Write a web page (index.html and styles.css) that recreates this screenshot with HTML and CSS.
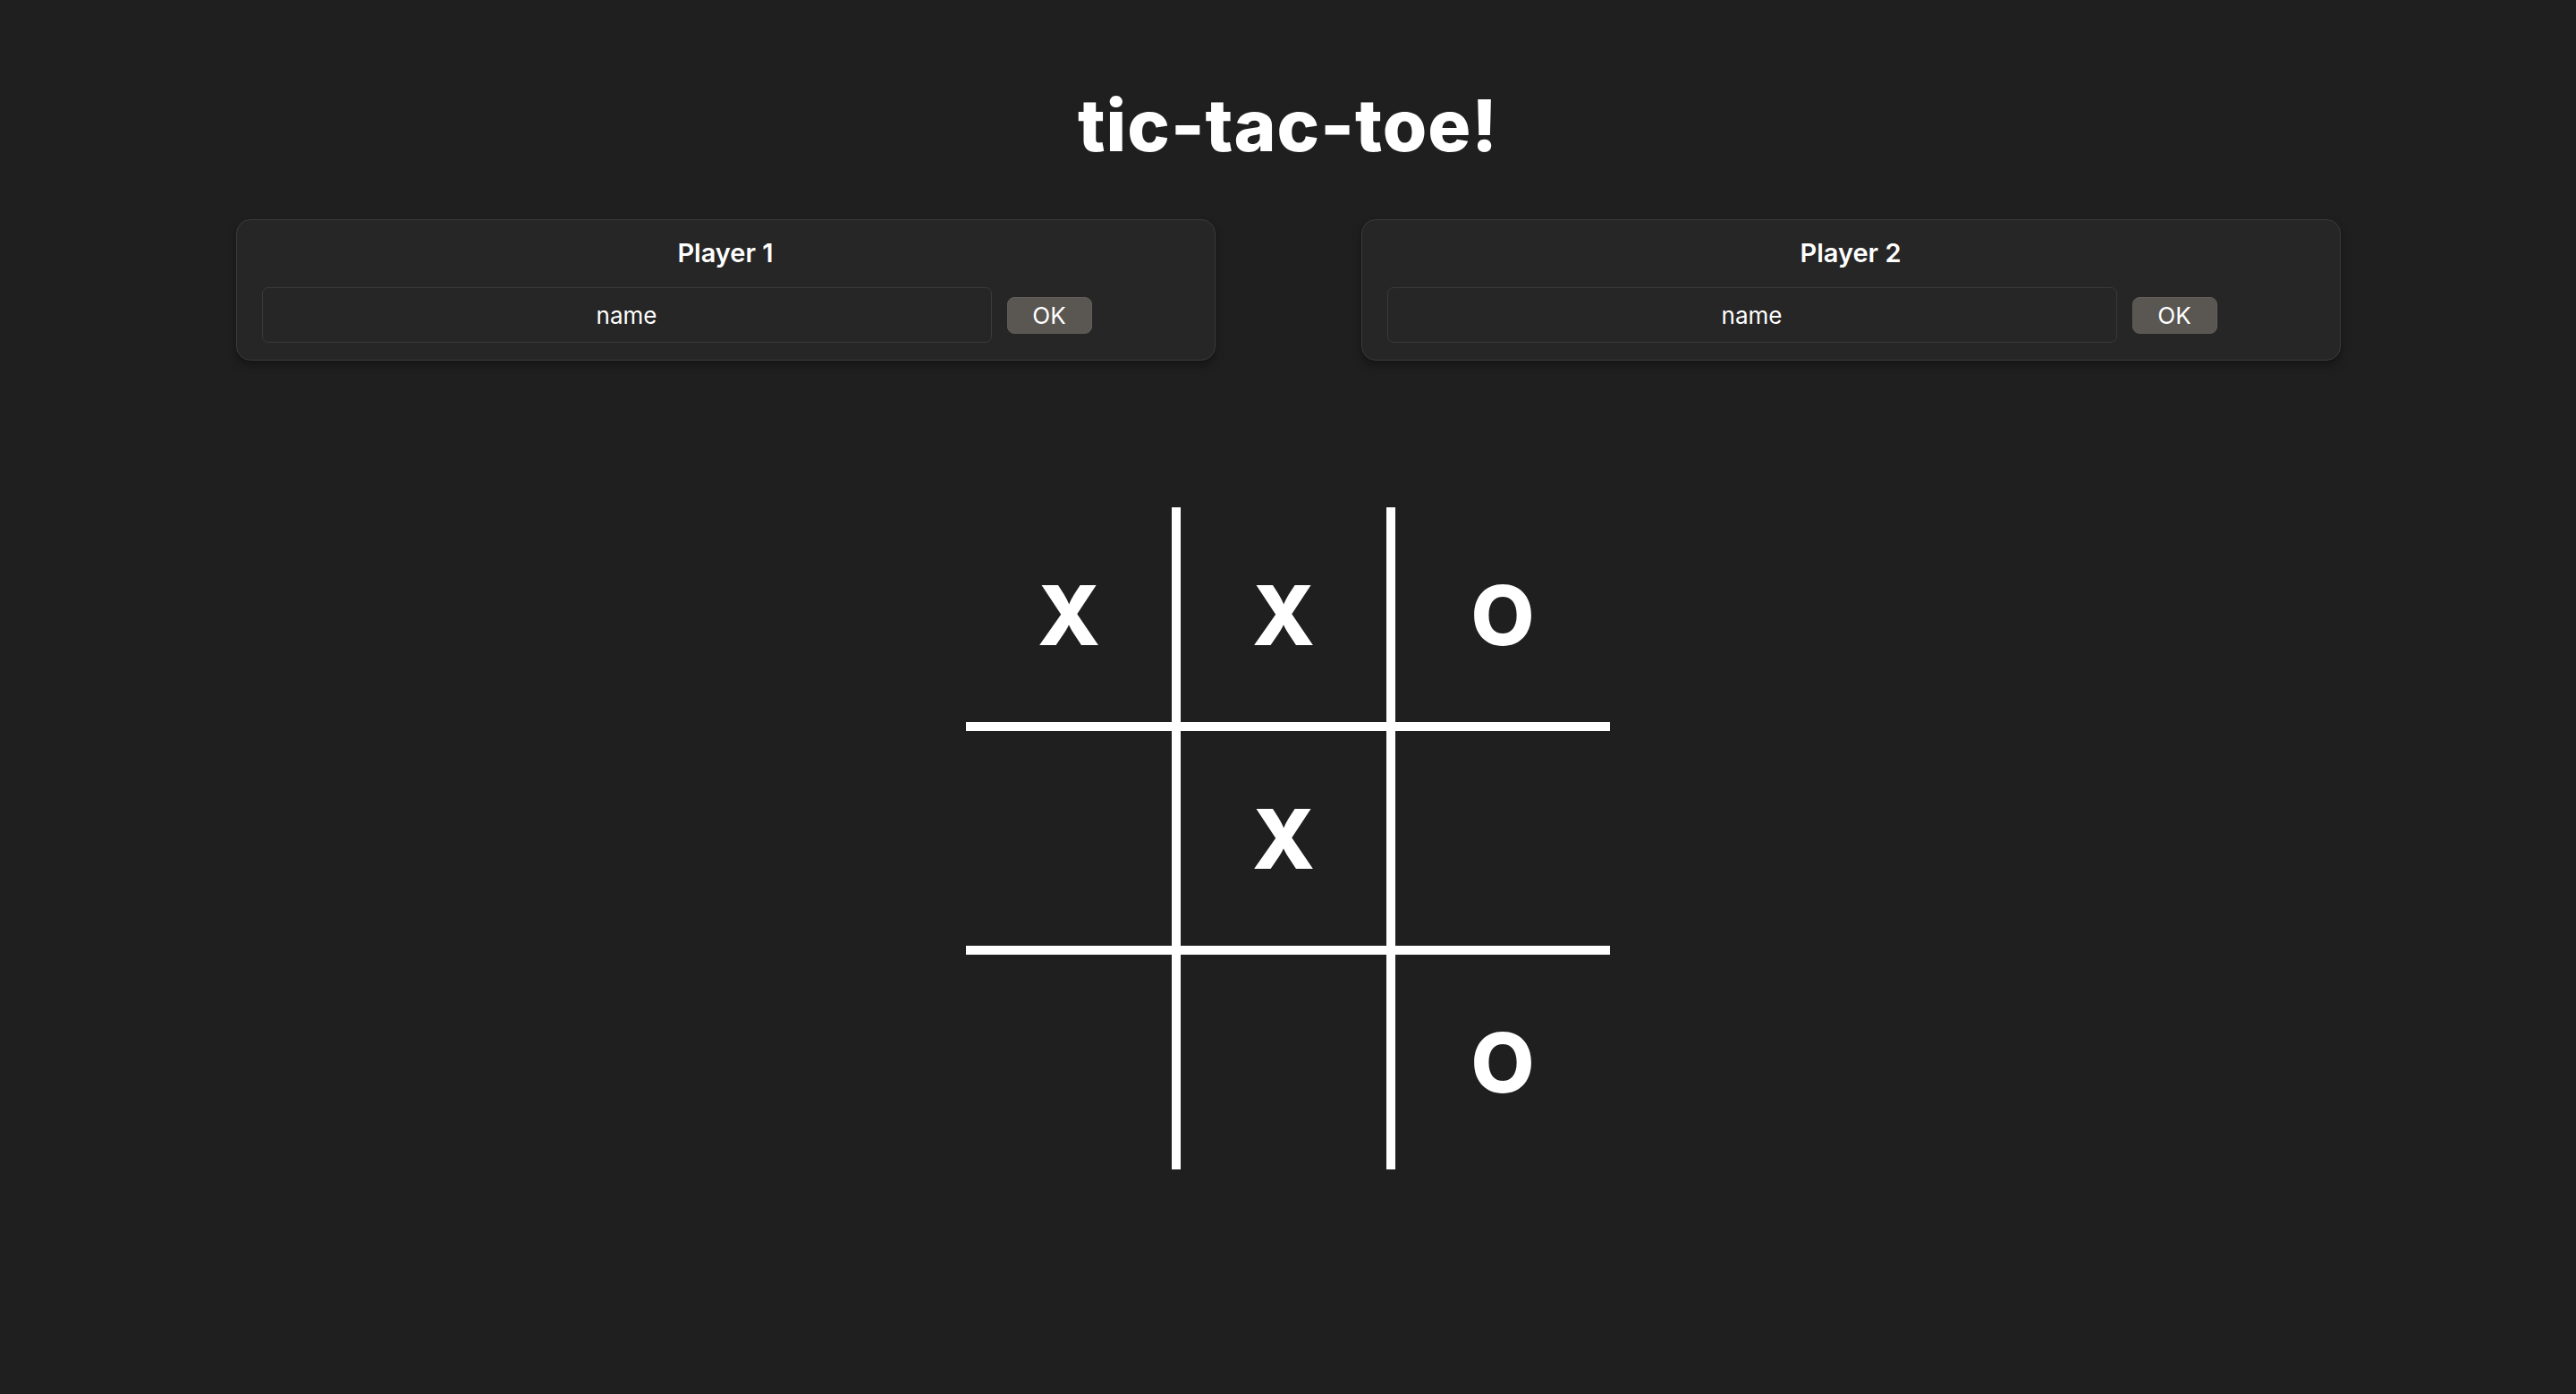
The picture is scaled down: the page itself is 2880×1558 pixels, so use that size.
FILE: index.html
```html
<!doctype html>
<html lang="en">
  <head>
    <meta charset="UTF-8" />
    <meta name="viewport" content="width=device-width, initial-scale=1.0" />
    <title>tic-tac-toe!</title>
    <link rel="stylesheet" href="styles.css">
  </head>
  <body>
    <h1 class="title">tic-tac-toe!</h1>

    <div class="players">
      <form class="player">
        <label class="player-label" for="p1">Player 1</label>
        <div class="player-row">
          <input type="text" id="p1" class="player-input" placeholder="name" />
          <button type="submit" class="player-ok">OK</button>
        </div>
      </form>
      <form class="player">
        <label class="player-label" for="p2">Player 2</label>
        <div class="player-row">
          <input type="text" id="p2" class="player-input" placeholder="name" />
          <button type="submit" class="player-ok">OK</button>
        </div>
      </form>
    </div>

    <div class="board">
      <div class="cell col-a row-a">X</div>
      <div class="cell col-b row-a">X</div>
      <div class="cell row-a">O</div>
      <div class="cell col-a row-b"></div>
      <div class="cell col-b row-b">X</div>
      <div class="cell row-b"></div>
      <div class="cell col-a"></div>
      <div class="cell col-b"></div>
      <div class="cell">O</div>
    </div>
  </body>
</html>
```

FILE: styles.css
```css
body {
  margin: 0;
  background-color: #1f1f1f;
  color: #ffffff;
  font-family: Inter, "Noto Sans", sans-serif;
}
.title {
  margin: 0;
  padding-top: 100px;
  font-size: 80px;
  font-weight: 800;
  line-height: 1;
  text-align: center;
  letter-spacing: 1px;
}
.players {
  display: grid;
  grid-template-columns: 1095px 1095px;
  column-gap: 163px;
  justify-content: center;
  margin-top: 65px;
}
.player {
  display: flex;
  flex-direction: column;
  padding: 20px 28px 19px;
  background-color: #262626;
  border: 1px solid #3b3b3b;
  border-radius: 16px;
  box-shadow: 0 5px 10px rgba(0, 0, 0, 0.35);
}
.player-label {
  font-size: 29px;
  font-weight: 600;
  text-align: center;
  line-height: 34px;
}
.player-row {
  display: flex;
  align-items: center;
  gap: 17px;
  margin-top: 21px;
}
.player-input {
  width: 816px;
  height: 62px;
  box-sizing: border-box;
  padding: 0 10px;
  background-color: #262626;
  border: 1px solid #3a3a3a;
  border-radius: 7px;
  color: #ffffff;
  font-family: inherit;
  font-size: 26px;
  text-align: center;
}
.player-input::placeholder {
  color: #ffffff;
}
.player-ok {
  width: 95px;
  height: 41px;
  background-color: #5a5752;
  border: 1px solid #625f5a;
  border-radius: 8px;
  color: #ffffff;
  font-family: inherit;
  font-size: 26px;
  cursor: pointer;
}
.board {
  display: grid;
  grid-template-columns: 240px 240px 240px;
  grid-template-rows: 250px 250px 240px;
  justify-content: center;
  margin-top: 164px;
}
.cell {
  display: flex;
  align-items: center;
  justify-content: center;
  box-sizing: border-box;
  font-size: 92px;
  font-weight: 800;
}
.col-a,
.col-b {
  border-right: 10px solid #ffffff;
}
.row-a,
.row-b {
  border-bottom: 10px solid #ffffff;
}
```
